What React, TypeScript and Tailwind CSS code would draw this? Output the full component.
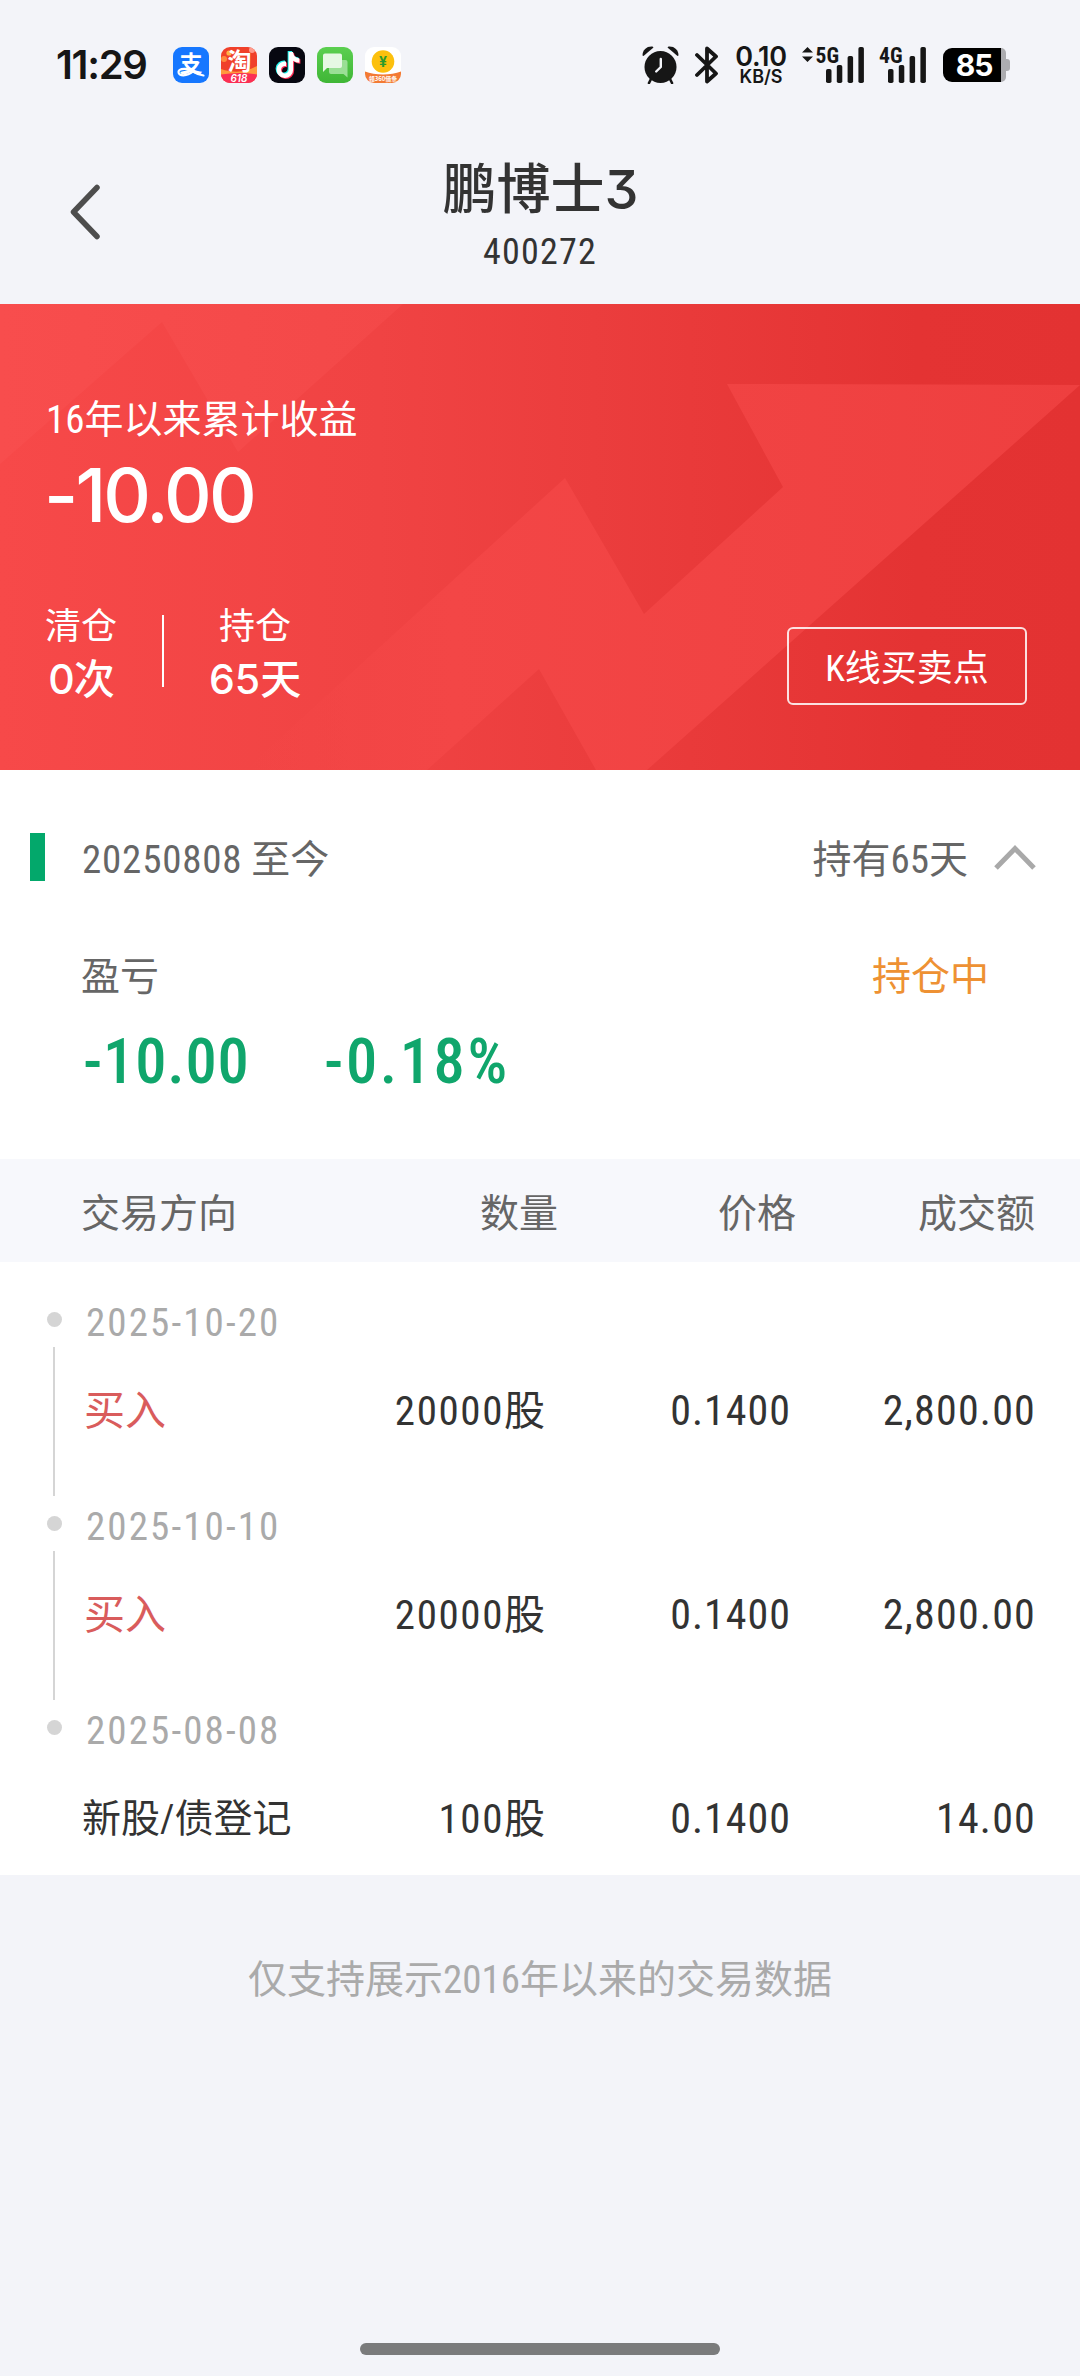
import type { ReactNode } from 'react';
import { FaTiktok } from 'react-icons/fa';

interface Trade {
  date: string;
  side: string;
  buy: boolean;
  quantity: string;
  price: string;
  amount: string;
}

const trades: Trade[] = [
  { date: '2025-10-20', side: '买入', buy: true, quantity: '20000', price: '0.1400', amount: '2,800.00' },
  { date: '2025-10-10', side: '买入', buy: true, quantity: '20000', price: '0.1400', amount: '2,800.00' },
  { date: '2025-08-08', side: '新股/债登记', buy: false, quantity: '100', price: '0.1400', amount: '14.00' }
];

function AppBadge({ className, children }: { className: string; children: ReactNode }) {
  return <span className={`relative block size-9 rounded-[9px] ${className}`}>{children}</span>;
}

function NotificationApps() {
  return (
    <div className="ml-[24px] flex gap-3">
      <AppBadge className="bg-[#1677ff]">
        <svg viewBox="0 0 36 36" className="size-9 overflow-visible">
          <text x="18" y="25" textAnchor="middle" fontSize="23" fontWeight="700" fill="#fff" fontFamily="Noto Sans CJK SC, sans-serif">支</text>
          <path d="M21 23.500C16 21.500 5.500 20.500 5.500 25C5.500 29.500 14 29.500 20 24.500C23 26.500 27 27.800 30.500 28.500" fill="none" stroke="#fff" strokeWidth="2.200" strokeLinecap="round" />
        </svg>
      </AppBadge>
      <AppBadge className="bg-[#f0402a]">
        <svg viewBox="0 0 36 36" className="size-9 overflow-visible">
          <clipPath id="badge">
            <rect width="36" height="36" rx="9" />
          </clipPath>
          <g clipPath="url(#badge)">
            <circle cx="8" cy="6" r="2.600" fill="#ffb347" />
            <circle cx="3" cy="12" r="3" fill="#ff8a3c" />
            <circle cx="31" cy="3" r="3" fill="#ff9b8c" />
            <path d="M0 22C12 26 24 26 36 19V28H0Z" fill="#ff9a3d" />
            <path d="M0 27.500C12 25.500 24 25.500 36 27.500V36H0Z" fill="#fb2f55" />
          </g>
          <text x="18.500" y="22.500" textAnchor="middle" fontSize="24" fontWeight="700" fill="#fff" fontFamily="Noto Sans CJK SC, sans-serif">淘</text>
          <text x="18" y="35" textAnchor="middle" fontSize="10" fontWeight="600" fontStyle="italic" fill="#fff" fontFamily="Inter, sans-serif">618</text>
        </svg>
      </AppBadge>
      <AppBadge className="bg-[#070811]">
        <FaTiktok size={26} className="absolute left-[5px] top-[4px] text-[#25f4ee]" />
        <FaTiktok size={26} className="absolute left-[7px] top-[6px] text-[#fe2c55]" />
        <FaTiktok size={26} className="absolute left-[6px] top-[5px] text-white" />
      </AppBadge>
      <AppBadge className="bg-linear-to-b from-[#5bcf50] to-[#3fb636]">
        <svg viewBox="0 0 36 36" className="size-9">
          <path d="M14 13H28.500A2 2 0 0 1 30.500 15V30.500L26.500 27H14A2 2 0 0 1 12 25V15A2 2 0 0 1 14 13Z" fill="#9adf95" />
          <path d="M8 6.500H23A2 2 0 0 1 25 8.500V19A2 2 0 0 1 23 21H10L6 25V8.500A2 2 0 0 1 8 6.500Z" fill="#e6f8e4" />
        </svg>
      </AppBadge>
      <AppBadge className="bg-white">
        <svg viewBox="0 0 36 36" className="size-9 overflow-visible">
          <path d="M0 24.500C10 28.500 26 28.500 36 24.500V27A9 9 0 0 1 27 36H9A9 9 0 0 1 0 27Z" fill="#f37a34" />
          <circle cx="18" cy="14.500" r="11.300" fill="#fcc00d" />
          <text x="18" y="19.500" textAnchor="middle" fontSize="14" fontWeight="700" fill="#2a9a2c" fontFamily="Inter, sans-serif">¥</text>
          <text x="18" y="34.200" textAnchor="middle" fontSize="6" fontWeight="700" fill="#fff" fontFamily="Noto Sans CJK SC, sans-serif">领360借条</text>
        </svg>
      </AppBadge>
    </div>
  );
}

function AlarmIcon() {
  return (
    <svg width="37" height="38" viewBox="0 0 37 38">
      <circle cx="18.500" cy="21" r="16" fill="#161616" />
      <path d="M0.500 9.500C0.500 3.500 5 0 10.500 0.500L11.500 1.500L1.500 10Z" fill="#161616" />
      <path d="M36.500 9.500C36.500 3.500 32 0 26.500 0.500L25.500 1.500L35.500 10Z" fill="#161616" />
      <path d="M9 33L7 37M28 33L30 37" stroke="#161616" strokeWidth="2.600" strokeLinecap="round" />
      <path d="M18.800 13V21L14.200 25.500" fill="none" stroke="#f3f4f9" strokeWidth="2.400" strokeLinecap="round" strokeLinejoin="round" />
    </svg>
  );
}

function BluetoothIcon() {
  return (
    <svg width="24" height="38" viewBox="0 0 24 38">
      <path d="M2 9L21 27.500L12 35.500V2.500L21 10.500L2 29" fill="none" stroke="#161616" strokeWidth="3.800" strokeLinecap="round" strokeLinejoin="round" />
    </svg>
  );
}

function Signal({ label, active }: { label: string; active?: boolean }) {
  const x = active ? 24 : 9;
  return (
    <svg width={x + 39} height="38" viewBox={`0 0 ${x + 39} 38`} className="overflow-visible">
      {active && <path d="M0 6.500L5.500 1L11 6.500ZM0 10.500L5.500 16L11 10.500Z" fill="#161616" />}
      <text
        x={active ? 13.5 : 0}
        y="16.500"
        textLength="23.500"
        lengthAdjust="spacingAndGlyphs"
        fontSize="22.500"
        fontWeight="700"
        fill="#161616"
        fontFamily="Roboto Condensed, sans-serif"
      >
        {label}
      </text>
      <rect x={x} y="23" width="5.500" height="14" rx="1.800" fill="#161616" />
      <rect x={x + 10.8} y="19" width="5.500" height="18" rx="1.800" fill="#161616" />
      <rect x={x + 21.6} y="10" width="5.500" height="27" rx="1.800" fill="#161616" />
      <rect x={x + 32.4} y="1" width="5.500" height="36" rx="1.800" fill="#161616" />
    </svg>
  );
}

function StatusBar() {
  return (
    <div className="flex h-[130px] items-center pl-[56px] pr-[70px] text-[#161616]">
      <span className="w-[93px] whitespace-nowrap font-[Inter] text-[40px] font-semibold leading-none tracking-[-1.3px]">11:29</span>
      <NotificationApps />
      <div className="ml-auto flex items-center">
        <AlarmIcon />
        <span className="ml-[16px]"><BluetoothIcon /></span>
        <div className="ml-[14px] flex w-[56px] flex-col items-center font-[Inter] font-semibold">
          <span className="text-[27px] leading-[22px] tracking-[-0.3px]">0.10</span>
          <span className="text-[18px] leading-[17px]">KB/S</span>
        </div>
        <span className="ml-[13px]"><Signal label="5G" active /></span>
        <span className="ml-[14px]"><Signal label="4G" /></span>
        <div className="ml-[16px] flex items-center">
          <span className="flex h-[34px] w-[58px] items-center justify-center rounded-l-[9px] bg-black pl-1 font-[Inter] text-[30px] font-bold leading-none tracking-[-1px] text-white">85</span>
          <span className="h-[34px] w-[5px] rounded-r-[5px] bg-[#acacb0]" />
          <span className="h-[12px] w-[4px] rounded-r-[3px] bg-[#acacb0]" />
        </div>
      </div>
    </div>
  );
}

function NavBar() {
  return (
    <header className="flex h-[174px] items-start px-[70px] text-[#333333]">
      <button type="button" aria-label="返回" className="mt-[54px] w-[60px]">
        <svg width="30" height="56" viewBox="0 0 30 56" fill="none" stroke="#4d4d4d" strokeWidth="5.500" strokeLinecap="round" strokeLinejoin="round">
          <path d="M27 3.500L3.500 28L27 52.500" />
        </svg>
      </button>
      <div className="flex flex-1 flex-col items-center pt-[24px]">
        <h1 className="pl-px font-[Inter,Noto_Sans_CJK_SC,sans-serif] text-[54px] font-medium leading-[72px] [font-feature-settings:'cv09']">鹏博士3</h1>
        <span className="mt-1 text-[36px] leading-[44px] tracking-[1.2px]">400272</span>
      </div>
      <div className="w-[60px]" />
    </header>
  );
}

function HeroBackdrop() {
  return (
    <svg className="absolute inset-0" width="1080" height="466" viewBox="0 0 1080 466" aria-hidden="true">
      <defs>
        <linearGradient id="base" x1="0" y1="0" x2="1" y2="0">
          <stop offset="0" stopColor="#f74949" />
          <stop offset="0.350" stopColor="#f04343" />
          <stop offset="0.550" stopColor="#eb3d3d" />
          <stop offset="0.850" stopColor="#e43333" />
          <stop offset="1" stopColor="#e33232" />
        </linearGradient>
        <linearGradient id="corner" x1="0" y1="0" x2="1" y2="0">
          <stop offset="0" stopColor="#f84d4d" />
          <stop offset="1" stopColor="#f34848" />
        </linearGradient>
        <linearGradient id="arrow" gradientUnits="userSpaceOnUse" x1="245" y1="0" x2="1080" y2="0">
          <stop offset="0" stopColor="#f54848" stopOpacity="0" />
          <stop offset="0.250" stopColor="#f34646" />
          <stop offset="1" stopColor="#ee3f3f" />
        </linearGradient>
      </defs>
      <rect width="1080" height="466" fill="url(#base)" />
      <path d="M0 0H403L238 148L162 18L0 160Z" fill="url(#corner)" />
      <path d="M727 80L1080 81L647 466H596L539 365L427 466H245L565 174L644 310L783 183Z" fill="url(#arrow)" />
    </svg>
  );
}

function SummaryHero() {
  return (
    <section className="relative h-[466px] overflow-hidden text-white">
      <HeroBackdrop />
      <div className="relative flex h-full flex-col pl-[46px] pr-[53px] pt-[92px]">
        <div className="text-[39px] leading-[48px]">16年以来累计收益</div>
        <div className="-ml-[2px] mt-[13px] font-[Inter] text-[74px] font-medium leading-[76px] tracking-[-2.8px]">-10.00</div>
        <div className="mt-[72px] flex items-end">
          <div className="flex w-[70px] flex-col items-center whitespace-nowrap">
            <span className="text-[36px] leading-[44px]">清仓</span>
            <span className="font-[Inter,Noto_Sans_CJK_SC,sans-serif] text-[41px] font-medium leading-[60px] tracking-[-1px]">0次</span>
          </div>
          <div className="mb-[22px] ml-[46px] h-[72px] w-[2px] bg-white" />
          <div className="ml-[45px] flex flex-col items-center whitespace-nowrap">
            <span className="text-[36px] leading-[44px]">持仓</span>
            <span className="font-[Inter,Noto_Sans_CJK_SC,sans-serif] text-[41px] font-medium leading-[60px]">65天</span>
          </div>
          <button type="button" className="mb-1 ml-auto h-[78px] w-[240px] rounded-[6px] border-2 border-white/85 pt-[5px] text-[36px] leading-[44px]">
            K线买卖点
          </button>
        </div>
      </div>
    </section>
  );
}

function Position() {
  return (
    <section className="h-[389px] bg-white pt-[63px] text-[39px] text-[#666666]">
      <div className="flex h-[54px] items-start pl-[30px] pr-[44px]">
        <span className="h-[48px] w-[15px] bg-[#03a86b]" />
        <span className="ml-[37px] leading-[55px]">
          <span className="tracking-[0.8px]">20250808</span> 至今
        </span>
        <span className="ml-auto leading-[55px]">持有65天</span>
        <svg className="ml-[26px] mt-[11px]" width="42" height="27" viewBox="0 0 42 27" fill="none" stroke="#a9a9a9" strokeWidth="5">
          <path d="M2 24L21 4.500L40 24" />
        </svg>
      </div>
      <div className="mt-[66px] flex h-[48px] items-center justify-between pl-[81px] pr-[91px]">
        <span>盈亏</span>
        <span className="text-[#ee9133]">持仓中</span>
      </div>
      <div className="mt-[31px] flex h-[60px] items-center pl-[83px] text-[62.5px] font-medium leading-[60px] text-[#10a66c]">
        <span className="w-[241px] tracking-[0.8px]">-10.00</span>
        <span className="tracking-[2.6px]">-0.18%</span>
      </div>
    </section>
  );
}

function TradeRow({ trade, last }: { trade: Trade; last: boolean }) {
  return (
    <li className={`flex ${last ? 'h-[169px]' : 'h-[204px]'}`}>
      <div className="ml-[47px] flex w-[15px] flex-col items-center pt-[14px]">
        <span className="size-[15px] rounded-full bg-[#d5d5d5]" />
        {!last && <span className="mr-px mt-[20px] h-[149px] w-[2px] bg-[#d5d5d5]" />}
      </div>
      <div className="flex flex-1 flex-col pr-[44px]">
        <span className="pl-[24px] text-[39px] leading-[50px] tracking-[2.1px] text-[#aaaaaa]">{trade.date}</span>
        <div className="mt-[38px] flex leading-[50px] text-[#333333]">
          {trade.buy ? (
            <span className="w-[240px] pl-[22px] text-[41px] text-[#d95c5c]">{trade.side}</span>
          ) : (
            <span className="w-[240px] pl-[20px] text-[39px]">{trade.side}</span>
          )}
          <span className="w-[243px] text-right text-[41px]">
            <span className="tracking-[1.6px]">{trade.quantity}</span>股
          </span>
          <span className="w-[246px] text-right text-[42px] tracking-[1px]">{trade.price}</span>
          <span className="flex-1 text-right text-[42px] tracking-[1.2px]">{trade.amount}</span>
        </div>
      </div>
    </li>
  );
}

export default function App() {
  return (
    <div className="flex h-[2376px] w-[1080px] flex-col bg-[#f3f4f9] font-[Roboto_Condensed,Noto_Sans_CJK_SC,sans-serif] font-normal">
      <StatusBar />
      <NavBar />
      <SummaryHero />
      <Position />
      <div className="flex h-[103px] items-center bg-[#f7f8fc] pl-[81px] pr-[45px] pt-[7px] text-[39px] text-[#666666]">
        <span className="w-[200px]">交易方向</span>
        <span className="w-[277px] text-right">数量</span>
        <span className="w-[238px] text-right">价格</span>
        <span className="flex-1 text-right">成交额</span>
      </div>
      <ul className="bg-white pt-[36px]">
        {trades.map((trade, i) => (
          <TradeRow key={trade.date} trade={trade} last={i === trades.length - 1} />
        ))}
      </ul>
      <p className="mt-[80px] text-center text-[39px] leading-[50px] text-[#aaaaaa]">仅支持展示2016年以来的交易数据</p>
      <div className="mx-auto mb-[21px] mt-auto h-[12px] w-[360px] rounded-full bg-[#7a7b7c]" />
    </div>
  );
}
